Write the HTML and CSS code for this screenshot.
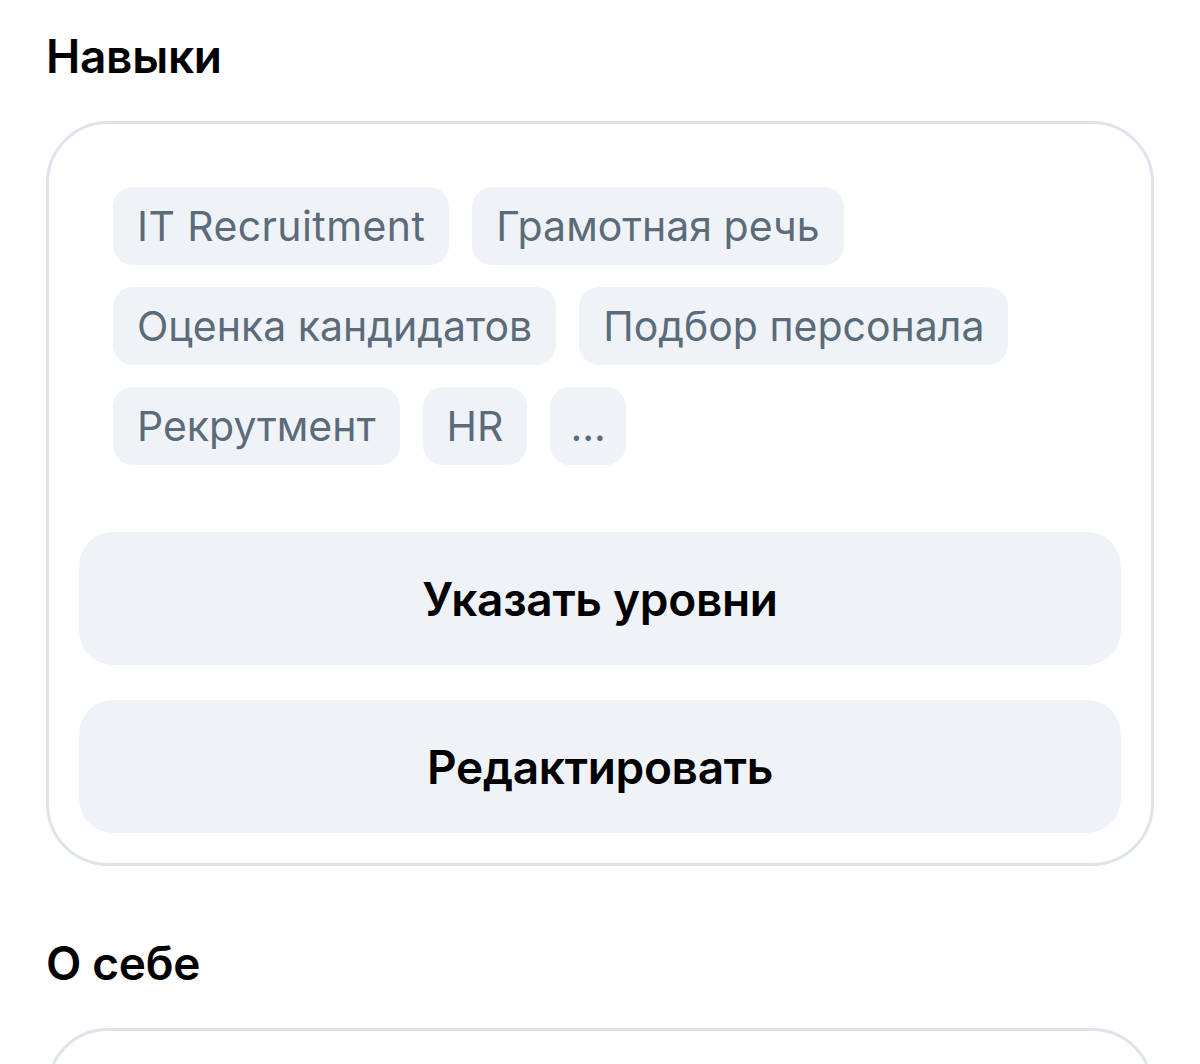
FILE: index.html
```html
<!DOCTYPE html>
<html lang="ru">
<head>
  <meta charset="UTF-8">
  <meta name="viewport" content="width=device-width, initial-scale=1.0">
  <title>Навыки</title>
  <link rel="stylesheet" href="styles.css">
</head>
<body>
  <section class="section">
    <h2 class="section-title">Навыки</h2>
    <div class="card">
      <div class="skills">
        <span class="chip chip-latin">IT Recruitment</span>
        <span class="chip">Грамотная речь</span>
        <span class="chip">Оценка кандидатов</span>
        <span class="chip">Подбор персонала</span>
        <span class="chip">Рекрутмент</span>
        <span class="chip">HR</span>
        <span class="chip chip-more">...</span>
      </div>
      <div class="actions">
        <button class="action-btn">Указать уровни</button>
        <button class="action-btn">Редактировать</button>
      </div>
    </div>
  </section>

  <section class="section">
    <h2 class="section-title">О себе</h2>
    <div class="card card-about"></div>
  </section>
</body>
</html>
```

FILE: styles.css
```css
body {
  margin: 0;
  padding: 0 46px;
  background-color: #FFF;
  color: #000;
  font-family: Inter, "Noto Sans", sans-serif;
}

.section-title {
  margin: 0;
  padding-top: 30px;
  font-size: 46px;
  font-weight: 600;
  line-height: 52px;
  letter-spacing: -0.3px;
}

.section + .section .section-title {
  padding-top: 71px;
}

.card {
  margin-top: 39px;
  border: 3px solid #dde4ec;
  border-radius: 62px;
  padding: 63px 30px 30px;
}

.skills {
  display: flex;
  flex-wrap: wrap;
  gap: 22px 23px;
  padding: 0 34px;
}

.chip {
  display: inline-flex;
  align-items: center;
  height: 78px;
  padding: 0 24px;
  border-radius: 20px;
  background-color: #eff3f8;
  color: #5b6b79;
  font-size: 41px;
}

.chip-latin {
  letter-spacing: 0.4px;
}

.chip-more {
  padding: 0 20px;
}

.actions {
  display: flex;
  flex-direction: column;
  gap: 35px;
  margin-top: 67px;
}

.action-btn {
  height: 133px;
  border: none;
  border-radius: 34px;
  background-color: #eff3f8;
  color: #000;
  font-family: inherit;
  font-size: 46px;
  font-weight: 600;
  letter-spacing: -0.3px;
  cursor: pointer;
}

.card-about {
  height: 200px;
  padding: 0;
}
```
